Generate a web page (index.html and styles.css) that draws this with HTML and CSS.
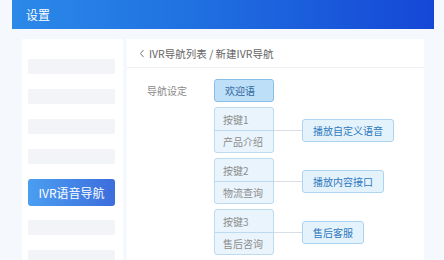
FILE: index.html
```html
<!DOCTYPE html>
<html lang="zh-CN">
<head>
<meta charset="utf-8">
<title>设置</title>
<link rel="stylesheet" href="styles.css">
</head>
<body>
<header class="topbar"><span class="topbar-title">设置</span></header>
<div class="layout">
  <aside class="sidebar">
    <div class="skel"></div>
    <div class="skel"></div>
    <div class="skel"></div>
    <div class="skel"></div>
    <div class="nav-active">IVR语音导航</div>
    <div class="skel"></div>
    <div class="skel"></div>
  </aside>
  <main class="panel">
    <div class="crumb">
      <svg class="crumb-back" width="6" height="9" viewBox="0 0 6 9"><path d="M4.5 1 L1.5 4.5 L4.5 8" fill="none" stroke="#777" stroke-width="1"/></svg>
      <span>IVR导航列表 / 新建IVR导航</span>
    </div>
    <div class="panel-body">
      <div class="field-label">导航设定</div>
      <div class="tree">
        <div class="welcome">欢迎语</div>
        <div class="branch">
          <div class="keygroup"><div class="cell">按键1</div><div class="cell cell-sep">产品介绍</div></div>
          <div class="link"></div>
          <div class="action">播放自定义语音</div>
        </div>
        <div class="branch">
          <div class="keygroup"><div class="cell">按键2</div><div class="cell cell-sep">物流查询</div></div>
          <div class="link"></div>
          <div class="action">播放内容接口</div>
        </div>
        <div class="branch">
          <div class="keygroup"><div class="cell">按键3</div><div class="cell cell-sep">售后咨询</div></div>
          <div class="link"></div>
          <div class="action">售后客服</div>
        </div>
      </div>
    </div>
  </main>
</div>
</body>
</html>
```
FILE: styles.css
```css
* { box-sizing: border-box; }
html, body { margin: 0; padding: 0; }
body {
  width: 444px;
  height: 260px;
  overflow: hidden;
  background: #f5f8fc;
  font-family: "Noto Sans CJK SC", "Noto Sans", sans-serif;
}
.topbar {
  margin: 0 10px 0 12px;
  height: 29px;
  background: linear-gradient(90deg, #2b89e9 0%, #1f6fe0 45%, #1547d6 100%);
  display: flex;
  align-items: center;
  padding-left: 14px;
}
.topbar-title {
  color: #ffffff;
  font-size: 12px;
  line-height: 1;
}
.layout {
  display: flex;
  gap: 4px;
  padding: 10px 0 0 22px;
}
.sidebar {
  width: 101px;
  height: 230px;
  background: #ffffff;
  padding: 20px 8px 0 6px;
  display: flex;
  flex-direction: column;
  gap: 15px;
}
.skel {
  height: 15px;
  background: #f3f4f7;
  border-radius: 2px;
  flex: none;
}
.nav-active {
  flex: none;
  height: 27px;
  margin-bottom: -1px;
  border-radius: 3px;
  background: linear-gradient(90deg, #4b9ef1 0%, #3c6ddc 100%);
  color: #ffffff;
  font-size: 12px;
  display: flex;
  align-items: center;
  justify-content: center;
}
.panel {
  width: 297px;
  height: 230px;
  background: #ffffff;
}
.crumb {
  height: 29px;
  border-bottom: 1px solid #eef0f3;
  display: flex;
  align-items: center;
  gap: 4px;
  padding-left: 12px;
  color: #666;
  font-size: 10.5px;
}
.crumb-back { flex: none; }
.panel-body {
  display: flex;
  padding: 11px 0 0 20px;
}
.field-label {
  width: 67px;
  height: 23px;
  display: flex;
  align-items: center;
  font-size: 10px;
  color: #8a8a8a;
}
.tree {
  display: flex;
  flex-direction: column;
  gap: 5px;
}
.welcome {
  width: 60px;
  height: 23px;
  background: #bddff8;
  border: 1px solid #86bfe9;
  border-radius: 3px;
  font-size: 10px;
  color: #35689f;
  padding-left: 10px;
  display: flex;
  align-items: center;
}
.branch {
  display: flex;
  align-items: center;
}
.keygroup {
  width: 60px;
  border: 1px solid #bcdaf0;
  border-radius: 3px;
  background: #e9f4fd;
}
.cell {
  height: 22px;
  display: flex;
  align-items: center;
  padding-left: 8px;
  font-size: 10px;
  color: #8c8c8c;
}
.cell-sep { border-top: 1px solid #bcdaf0; }
.link {
  width: 28px;
  height: 1px;
  background: #d8dee6;
}
.action {
  height: 23px;
  padding: 0 10px;
  background: #e4f2fc;
  border: 1px solid #acd3ef;
  border-radius: 3px;
  font-size: 10px;
  color: #2f79bd;
  display: flex;
  align-items: center;
}
```
